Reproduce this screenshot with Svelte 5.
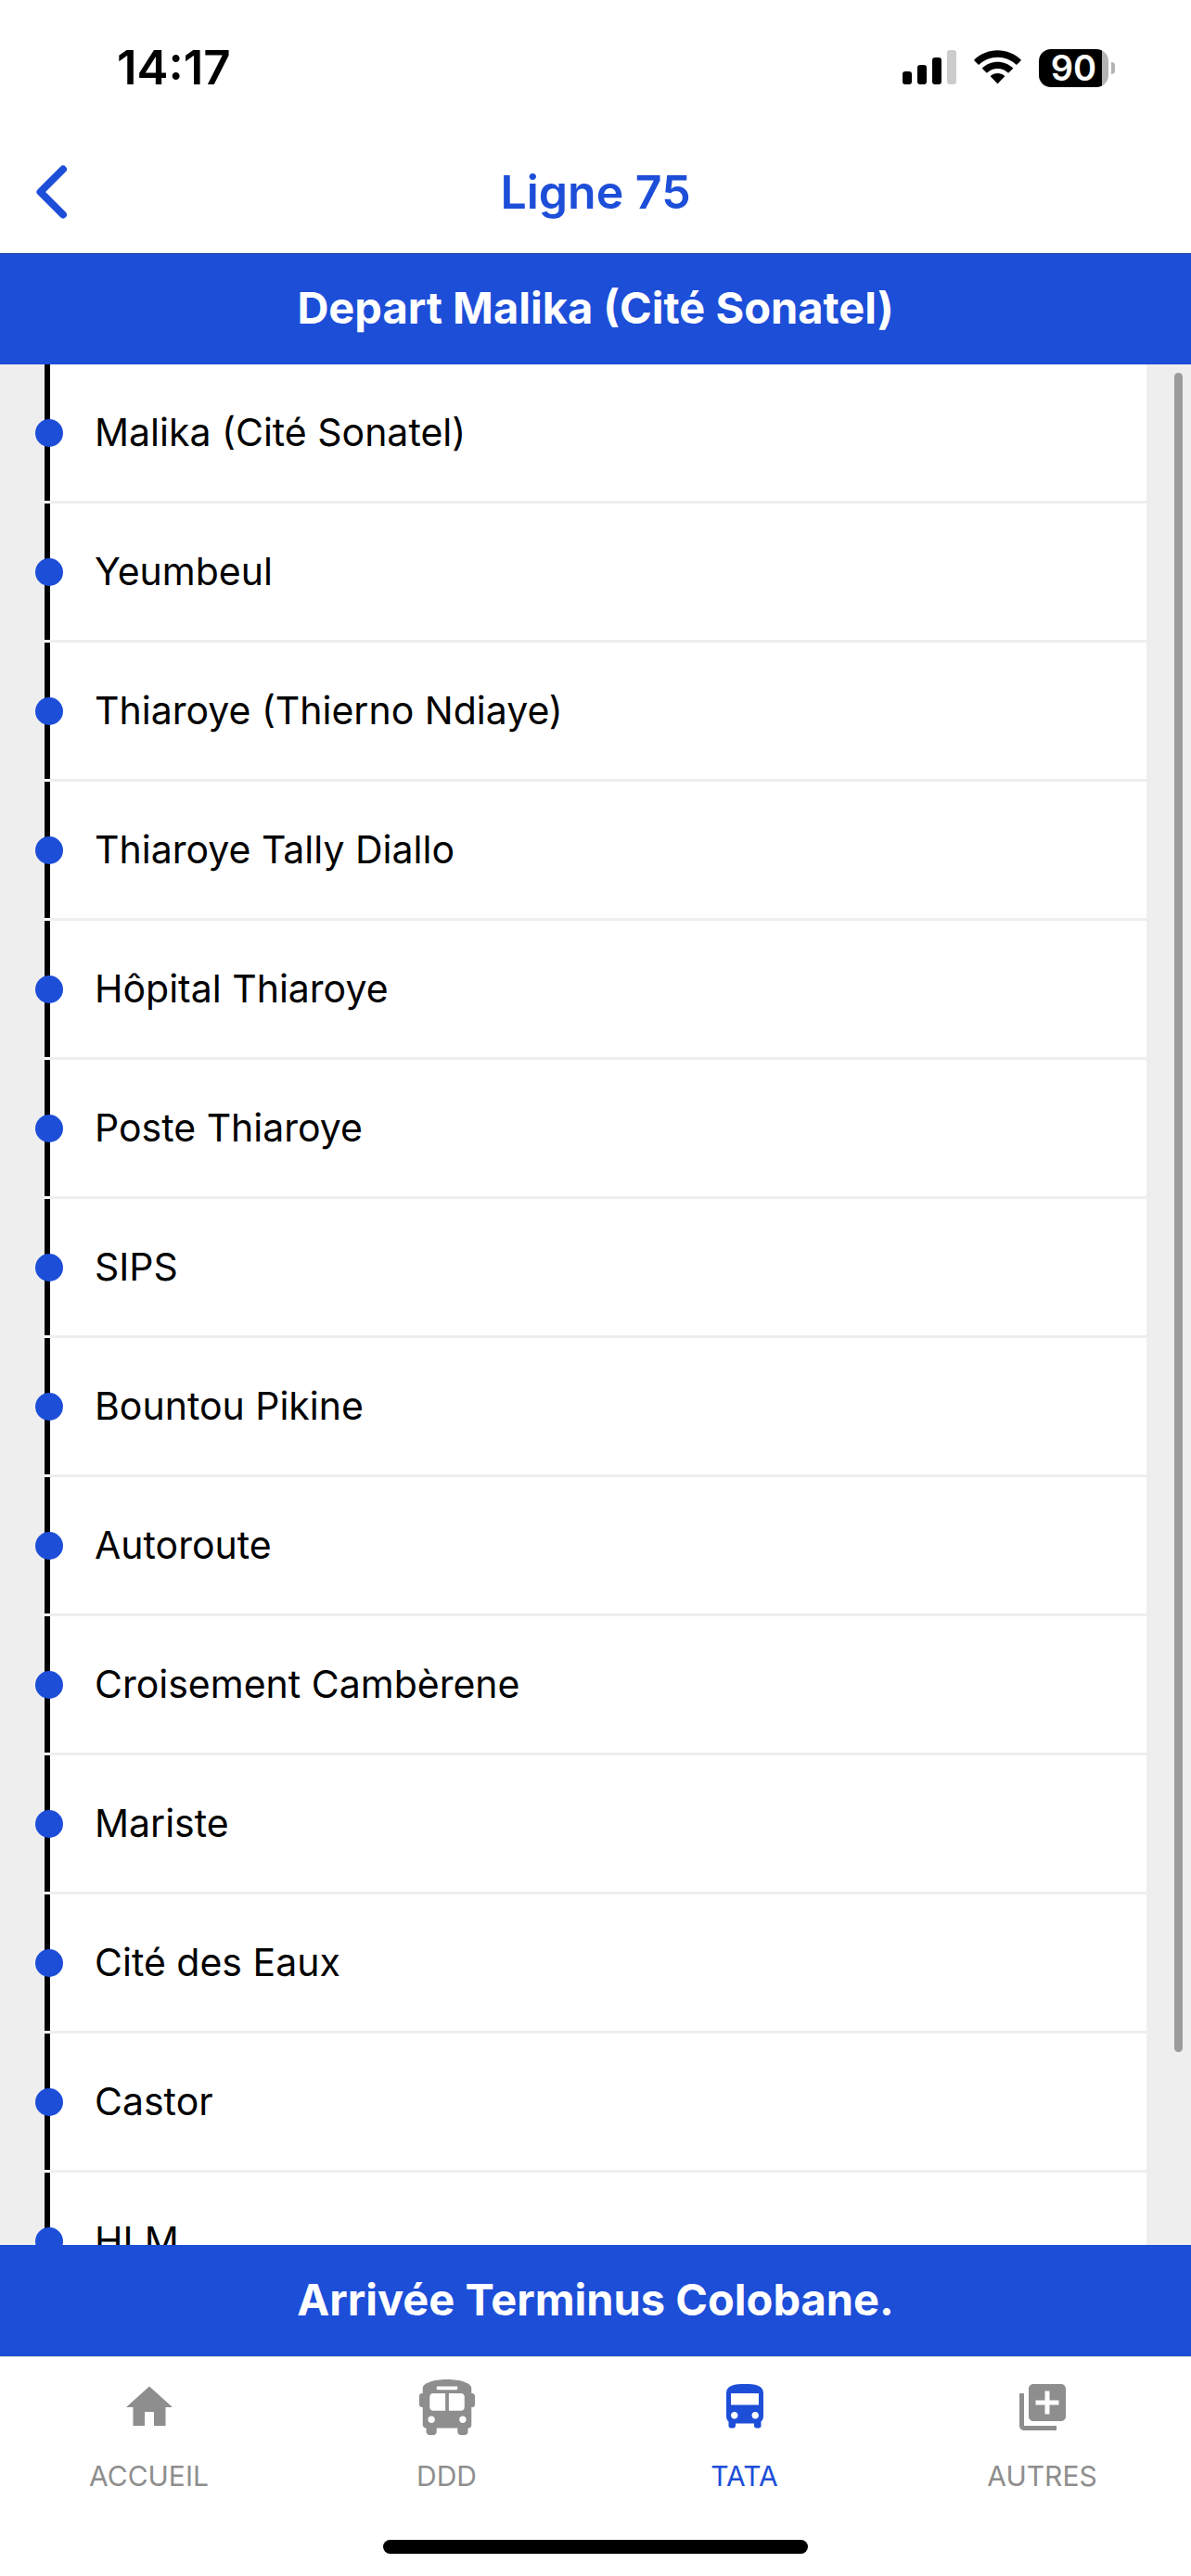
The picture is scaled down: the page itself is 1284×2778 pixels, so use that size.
<script>
  const stops = [
    'Malika (Cité Sonatel)',
    'Yeumbeul',
    'Thiaroye (Thierno Ndiaye)',
    'Thiaroye Tally Diallo',
    'Hôpital Thiaroye',
    'Poste Thiaroye',
    'SIPS',
    'Bountou Pikine',
    'Autoroute',
    'Croisement Cambèrene',
    'Mariste',
    'Cité des Eaux',
    'Castor',
    'HLM'
  ];

  const tabs = [
    { label: 'ACCUEIL', box: '0 0 24 24', path: 'M10 20v-6h4v6h5v-8h3L12 3 2 12h3v8z' },
    {
      label: 'DDD',
      box: '0 0 512 512',
      path: 'M488 128h-8V80c0-44.8-99.2-80-224-80S32 35.2 32 80v48h-8c-13.25 0-24 10.74-24 24v80c0 13.25 10.75 24 24 24h8v160c0 17.67 14.33 32 32 32v32c0 17.67 14.33 32 32 32h32c17.67 0 32-14.33 32-32v-32h192v32c0 17.67 14.33 32 32 32h32c17.67 0 32-14.33 32-32v-32h6.4c16 0 25.6-12.8 25.6-25.6V256h8c13.25 0 24-10.75 24-24v-80c0-13.26-10.75-24-24-24zM160 72c0-4.42 3.58-8 8-8h176c4.42 0 8 3.58 8 8v16c0 4.42-3.58 8-8 8H168c-4.42 0-8-3.58-8-8V72zm-48 328c-17.67 0-32-14.33-32-32s14.33-32 32-32 32 14.33 32 32-14.33 32-32 32zm128-112H128c-17.67 0-32-14.33-32-32v-96c0-17.67 14.33-32 32-32h112v160zm32 0V128h112c17.67 0 32 14.33 32 32v96c0 17.67-14.33 32-32 32H272zm128 112c-17.67 0-32-14.33-32-32s14.33-32 32-32 32 14.33 32 32-14.33 32-32 32z'
    },
    {
      label: 'TATA',
      box: '0 0 24 24',
      active: true,
      path: 'M4 16c0 .88.39 1.67 1 2.22V20c0 .55.45 1 1 1h1c.55 0 1-.45 1-1v-1h8v1c0 .55.45 1 1 1h1c.55 0 1-.45 1-1v-1.78c.61-.55 1-1.34 1-2.22V6c0-3.5-3.58-4-8-4s-8 .5-8 4v10zm3.5 1c-.83 0-1.5-.67-1.5-1.5S6.67 14 7.5 14s1.5.67 1.5 1.5S8.33 17 7.5 17zm9 0c-.83 0-1.5-.67-1.5-1.5s.67-1.5 1.5-1.5 1.5.67 1.5 1.5-.67 1.5-1.5 1.5zm1.5-6H6V6h12v5z'
    },
    {
      label: 'AUTRES',
      box: '0 0 24 24',
      path: 'M4 6H2v14c0 1.1.9 2 2 2h14v-2H4V6zm16-4H8c-1.1 0-2 .9-2 2v12c0 1.1.9 2 2 2h12c1.1 0 2-.9 2-2V4c0-1.1-.9-2-2-2zm-1 9h-4v4h-2v-4H9V9h4V5h2v4h4v2z'
    }
  ];
</script>

<div class="app">
  <div class="status">
    <span class="time">14:17</span>
    <div class="indicators">
      <svg class="signal" viewBox="0 1 58 38" aria-hidden="true">
        <rect x="0" y="24" width="10" height="14" rx="3" />
        <rect x="16" y="17" width="10" height="21" rx="3" />
        <rect x="32" y="9" width="10" height="29" rx="3" />
        <rect x="48" y="1" width="10" height="37" rx="3" fill="#ccc" />
      </svg>
      <svg class="wifi" viewBox="0 1 52 38" aria-hidden="true">
        <path d="M26 1C16.300 1 7.300 4.800.500 11.200Q0 11.800.500 12.400L4.600 16.500Q5.200 17 5.800 16.500C11.200 11.500 18.300 8.600 26 8.600S40.800 11.500 46.200 16.500Q46.800 17 47.400 16.500L51.500 12.400Q52 11.800 51.500 11.200C44.700 4.800 35.700 1 26 1Z" />
        <path d="M26 13.500C19.700 13.500 13.900 15.900 9.400 20Q8.900 20.600 9.400 21.200L13.600 25.300Q14.200 25.800 14.800 25.300C17.800 22.600 21.700 21 26 21S34.200 22.600 37.200 25.300Q37.800 25.800 38.400 25.300L42.600 21.200Q43.100 20.600 42.600 20C38.100 15.900 32.300 13.500 26 13.500Z" />
        <path d="M26 26C23.100 26 20.500 27 18.500 28.800Q17.900 29.400 18.500 30L25.400 37.200Q26 37.800 26.600 37.200L33.500 30Q34.100 29.400 33.500 28.800C31.500 27 28.900 26 26 26Z" />
      </svg>
      <div class="battery">
        <span class="cell">90</span>
        <span class="cap"></span>
      </div>
    </div>
  </div>

  <header class="bar">
    <button class="back" aria-label="Retour">
      <svg viewBox="0 0 34 58" aria-hidden="true">
        <path d="M29 4.500L4.500 29L29 53.500" />
      </svg>
    </button>
    <h1>Ligne 75</h1>
  </header>

  <h2 class="banner top">Depart Malika (Cité Sonatel)</h2>

  <main class="route">
    <ul class="stops">
      {#each stops as stop}
        <li>
          <span class="rail"></span>
          <span class="dot"></span>
          <span class="name">{stop}</span>
        </li>
      {/each}
    </ul>
    <div class="thumb"></div>
  </main>

  <h2 class="banner">Arrivée Terminus Colobane.</h2>

  <nav class="tabs">
    {#each tabs as tab}
      <a href="#{tab.label.toLowerCase()}" class:active={tab.active}>
        <svg viewBox={tab.box} aria-hidden="true"><path d={tab.path} /></svg>
        <span>{tab.label}</span>
      </a>
    {/each}
  </nav>

  <div class="home"><span></span></div>
</div>

<style>
  :global(body) {
    margin: 0;
    background: #fff;
  }

  .app {
    display: flex;
    flex-direction: column;
    height: 100vh;
    font-family: Inter, 'Liberation Sans', sans-serif;
    color: #000;
    background: #fff;
  }

  .status {
    display: flex;
    align-items: center;
    justify-content: space-between;
    flex: none;
    height: 146px;
    padding: 0 82px 0 126px;
  }

  .time {
    font-size: 51px;
    font-weight: 600;
    line-height: 60px;
  }

  .indicators {
    display: flex;
    align-items: center;
    gap: 19px;
  }

  .signal {
    width: 58px;
    height: 38px;
  }

  .wifi {
    width: 51px;
    height: 38px;
  }

  .battery {
    display: flex;
    align-items: center;
    gap: 3px;
  }

  .cell {
    width: 75px;
    height: 41px;
    border-radius: 13px;
    background: linear-gradient(to right, #000 68px, #b3b3b3 68px);
    color: #fff;
    font-size: 38px;
    font-weight: 600;
    line-height: 41px;
    text-align: center;
  }

  .cap {
    width: 4px;
    height: 13px;
    border-radius: 0 6px 6px 0;
    background: #b3b3b3;
  }

  .bar {
    display: grid;
    grid-template-columns: 1fr auto 1fr;
    align-items: center;
    flex: none;
    height: 121px;
    padding: 0 39px 6px;
    border-bottom: 1px solid #163a9f;
    color: #1d4ed8;
  }

  .back {
    display: flex;
    justify-self: start;
    padding: 0;
    border: 0;
    background: none;
    color: inherit;
  }

  .back svg {
    width: 34px;
    height: 58px;
    fill: none;
    stroke: currentColor;
    stroke-width: 8;
    stroke-linecap: round;
    stroke-linejoin: round;
  }

  h1 {
    margin: 0;
    font-size: 50px;
    font-weight: 600;
    line-height: 60px;
  }

  .banner {
    flex: none;
    margin: 0;
    padding-bottom: 2px;
    background: #1d4ed8;
    color: #fff;
    font-size: 47px;
    font-weight: 700;
    line-height: 118px;
    text-align: center;
  }

  .banner.top {
    padding-bottom: 3px;
    line-height: 116px;
  }

  .route {
    position: relative;
    flex: 1;
    min-height: 0;
    background: #eee;
  }

  .stops {
    height: 100%;
    margin: 0;
    padding: 0 48px;
    overflow-y: auto;
    scrollbar-width: none;
    box-sizing: border-box;
    list-style: none;
  }

  li {
    position: relative;
    display: flex;
    background: #fff;
    font-size: 41px;
    line-height: 147px;
  }

  .rail {
    flex: none;
    width: 6px;
    margin-bottom: 3px;
    background: #000;
  }

  .name {
    flex: 1;
    padding-left: 48px;
    border-bottom: 3px solid #eee;
  }

  .dot {
    position: absolute;
    top: 59px;
    left: -10px;
    width: 30px;
    height: 30px;
    border-radius: 50%;
    background: #1d4ed8;
  }

  .thumb {
    position: absolute;
    top: 9px;
    right: 9px;
    bottom: 208px;
    width: 9px;
    border-radius: 5px;
    background: #9b9b9b;
  }

  .tabs {
    display: grid;
    grid-template-columns: repeat(4, 1fr);
    flex: none;
    border-top: 1px solid #d8d8d8;
  }

  .tabs a {
    display: flex;
    flex-direction: column;
    align-items: center;
    gap: 26px;
    padding: 24px 0 20px;
    color: #8e8e8e;
    font-size: 30px;
    line-height: 36px;
    text-decoration: none;
  }

  .tabs a.active {
    color: #1d4ed8;
  }

  .tabs svg {
    width: 60px;
    height: 60px;
    fill: currentColor;
  }

  .home {
    display: flex;
    justify-content: center;
    flex: none;
    padding: 31px 0 24px;
  }

  .home span {
    width: 458px;
    height: 15px;
    border-radius: 8px;
    background: #000;
  }
</style>
